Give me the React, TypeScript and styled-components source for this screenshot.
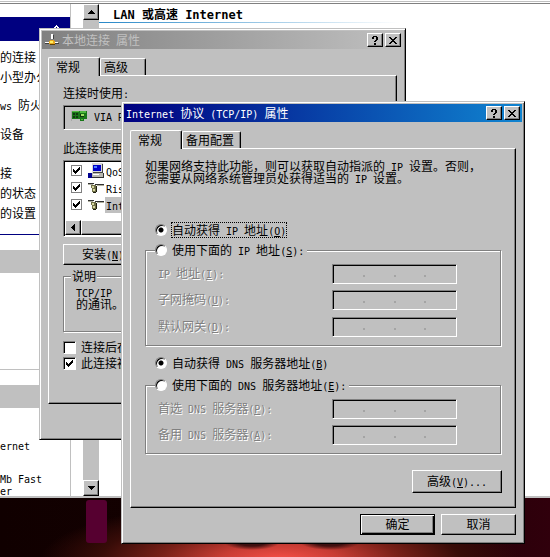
import React from "react";
import styled, { createGlobalStyle, css } from "styled-components";

const face = "#c0c0c0";
const shade = "#808080";

const GlobalStyle = createGlobalStyle`
  * { box-sizing: border-box; }
  body {
    margin: 0;
    font: 12px/12px "Noto Sans CJK SC", "Liberation Sans", sans-serif;
    color: #000;
    white-space: nowrap;
    overflow: hidden;
  }
  button, input { font: inherit; color: inherit; margin: 0; border-radius: 0; }
`;

/* ---------- text ---------- */

const Latin = styled.span`
  font-family: "DejaVu Sans Mono", "Liberation Mono", monospace;
  font-size: 10px;
  line-height: 0;
  white-space: pre;
`;

/** Half-width runs get the monospace face; "&X" underlines the access key X. */
function Text({ children }: { children: string }) {
  const runs = children.match(/[\x20-\x7e]+|[^\x20-\x7e]+/g) ?? [];
  return (
    <>
      {runs.map((run, i) => {
        if (!/^[\x20-\x7e]/.test(run)) return <React.Fragment key={i}>{run}</React.Fragment>;
        const [before, after] = run.split("&");
        return (
          <Latin key={i}>
            {before}
            {after && <u>{after[0]}</u>}
            {after && after.slice(1)}
          </Latin>
        );
      })}
    </>
  );
}

/* ---------- bevels ---------- */

const raised = css`
  color: #000;
  background: ${face};
  border: 1px solid;
  border-color: #fff #000 #000 #fff;
  box-shadow: inset -1px -1px 0 ${shade};
`;

const sunken = css`
  border: 1px solid;
  border-color: ${shade} #fff #fff ${shade};
  box-shadow: inset 1px 1px 0 #000;
`;

const Button = styled.button<{ $w?: number; $tall?: boolean; $primary?: boolean }>`
  ${raised}
  height: ${(p) => (p.$tall ? 23 : 21)}px;
  width: ${(p) => p.$w ?? 75}px;
  padding: 0 0 2px;
  ${(p) =>
    p.$primary &&
    css`
      border-color: #000;
      box-shadow: inset 1px 1px 0 #fff, inset -1px -1px 0 #000, inset -2px -2px 0 ${shade};
    `}
`;

/* ---------- desktop and the window in the back ---------- */

const Desktop = styled.div`
  position: relative;
  display: flex;
  flex-direction: column;
  height: 100vh;
  overflow: hidden;
`;

const Wallpaper = styled.div`
  height: 59px;
  padding: 2px 86px;
  background:
    radial-gradient(ellipse 28px 8px at 252px 44px, #401010 50%, transparent),
    radial-gradient(ellipse 30px 8px at 330px 44px, #401010 50%, transparent),
    radial-gradient(ellipse 240px 60px at 280px 62px, #f85048, #c83c34 25%, #782018 50%, #380c08 75%, transparent),
    linear-gradient(90deg, #100000, #180202 60%, #30000c);
`;

const Pillar = styled.div`
  width: 21px;
  height: 43px;
  border-radius: 3px;
  background: #560030;
`;

const Explorer = styled.main`
  flex: 1;
  min-height: 0;
  display: flex;
  background: #fff;
  border-bottom: 2px solid ${face};
  box-shadow: inset 0 1px 0 #fff, inset 0 2px 0 ${face}, inset 0 3px 0 #fff, inset 0 4px 0 ${shade};
  padding-top: 4px;
`;

const Sidebar = styled.nav`
  width: 71px;
  overflow: hidden;
  padding-top: 13px;
  border-right: 1px solid ${face};
`;

const SidebarGap = styled.div`
  width: 12px;
`;

const SidebarHead = styled.div<{ $active?: boolean }>`
  display: flex;
  justify-content: flex-end;
  align-items: center;
  height: ${(p) => (p.$active ? 24 : 23)}px;
  margin-right: -1px;
  padding: 0 11px;
  background: ${(p) => (p.$active ? "#000080" : face)};
`;

const TaskList = styled.div`
  display: flex;
  flex-direction: column;
  height: 194px;
  padding-top: 10px;
  border-bottom: 1px solid #000080;
`;

const TaskLink = styled.a<{ $space?: number }>`
  color: #000;
  text-decoration: none;
  height: 12px;
  margin-bottom: ${(p) => p.$space ?? 8}px;
`;

const Blank = styled.div<{ $h: number; $line?: boolean }>`
  height: ${(p) => p.$h}px;
  border-bottom: ${(p) => (p.$line ? `1px solid ${face}` : "0")};
`;

const Details = styled.div`
  padding-top: 31px;
`;

const DetailLine = styled.p<{ $space?: number }>`
  margin: 0 0 ${(p) => p.$space ?? 0}px;
`;

const ScrollTrack = styled.div`
  display: flex;
  flex-direction: column;
  justify-content: space-between;
  width: 16px;
  background: ${face};
`;

const ScrollButton = styled.button<{ $h?: number }>`
  ${raised}
  display: grid;
  place-items: center;
  width: 16px;
  height: ${(p) => p.$h ?? 16}px;
  padding: 0;
`;

const ExplorerBody = styled.section`
  flex: 1;
`;

const SectionTitle = styled.h2`
  margin: 0;
  padding: 4px 14px 2px;
  font-size: 12px;
  line-height: 12px;
  font-weight: 700;
  ${Latin} {
    font-size: 12px;
  }
`;

const TitleRule = styled.div`
  height: 1px;
  max-width: 300px;
  background: linear-gradient(90deg, #2888c8, #fff);
`;

/* ---------- dialogs ---------- */

const Dialog = styled.section<{ $x: number; $y: number; $w: number }>`
  position: absolute;
  left: ${(p) => p.$x}px;
  top: ${(p) => p.$y}px;
  width: ${(p) => p.$w}px;
  padding: 2px;
  background: ${face};
  border: 1px solid;
  border-color: ${face} #000 #000 ${face};
  box-shadow: inset 1px 1px 0 #fff, inset -1px -1px 0 ${shade};
`;

const TitleBar = styled.header<{ $active?: boolean }>`
  display: flex;
  align-items: center;
  height: 18px;
  padding: 0 2px;
  color: ${(p) => (p.$active ? "#fff" : face)};
  background: ${(p) =>
    p.$active
      ? "linear-gradient(90deg, #000080, #1084d0)"
      : "linear-gradient(90deg, #808080, #c0c0c0)"};
`;

const TitleIcon = styled.span`
  display: flex;
  width: 18px;
`;

const Title = styled.h1`
  flex: 1;
  margin: 0;
  font-size: 12px;
  line-height: 14px;
  font-weight: 400;
`;

const CaptionButton = styled.button`
  ${raised}
  display: grid;
  place-items: center;
  width: 16px;
  height: 14px;
  padding: 0;
  margin-left: 2px;
`;

const Tabs = styled.div`
  display: flex;
  align-items: flex-end;
  height: 26px;
  margin: 0 6px;
`;

const Tab = styled.button<{ $selected?: boolean; $w: number }>`
  width: ${(p) => p.$w}px;
  height: ${(p) => (p.$selected ? 19 : 17)}px;
  margin-bottom: ${(p) => (p.$selected ? -1 : 0)}px;
  padding: 0 0 1px ${(p) => (p.$selected ? 7 : 3)}px;
  text-align: left;
  z-index: ${(p) => (p.$selected ? 1 : 0)};
  background: ${face};
  border: 1px solid;
  border-color: #fff #000 transparent #fff;
  border-bottom: 0;
  border-radius: 2px 2px 0 0;
  box-shadow: inset -1px 0 0 ${shade};
`;

const Page = styled.div<{ $bottom: number }>`
  display: flex;
  flex-direction: column;
  margin: 0 6px;
  padding: 11px 13px ${(p) => p.$bottom}px 14px;
  ${raised}
`;

const Intro = styled.p`
  margin: 0 0 38px;
`;

const Group = styled.fieldset<{ $space: number; $before?: number }>`
  min-width: 0;
  margin: ${(p) => p.$before ?? 0}px 1px ${(p) => p.$space}px 0;
  padding: 6px 43px 8px 12px;
  border: 1px solid ${shade};
  box-shadow: 1px 1px 0 #fff, inset 1px 1px 0 #fff;
`;

const Legend = styled.legend<{ $text?: boolean }>`
  margin-left: ${(p) => (p.$text ? -5 : -3)}px;
  padding: 0 ${(p) => (p.$text ? 1 : 2)}px 0 ${(p) => (p.$text ? 1 : 0)}px;
  background: ${face};
`;

const Choice = styled.label<{ $inset?: boolean }>`
  display: flex;
  align-items: center;
  gap: 4px;
  height: 16px;
  margin-left: ${(p) => (p.$inset ? 10 : 0)}px;
`;

const ChoiceText = styled.span<{ $focused?: boolean }>`
  line-height: 14px;
  border: 1px dotted ${(p) => (p.$focused ? "#000" : "transparent")};
`;

const Radio = styled.input.attrs({ type: "radio" })`
  appearance: none;
  width: 12px;
  height: 12px;
  border: 1px solid;
  border-color: ${shade} #fff #fff ${shade};
  border-radius: 50%;
  background: #fff;
  box-shadow: inset 1px 1px 0 #000;
  &:checked {
    background: radial-gradient(circle at center, #000 2px, #fff 3px);
  }
`;

const IpRow = styled.div<{ $space: number }>`
  display: flex;
  justify-content: space-between;
  align-items: center;
  height: 20px;
  margin-bottom: ${(p) => p.$space}px;
`;

const IpLabel = styled.label`
  padding-bottom: 2px;
  color: ${shade};
  text-shadow: 1px 1px 0 #fff;
`;

const IpBox = styled.div`
  ${sunken}
  display: flex;
  align-items: center;
  width: 125px;
  height: 20px;
  padding: 1px;
`;

const Octet = styled.input`
  flex: 1;
  min-width: 0;
  height: 14px;
  padding: 0;
  border: 0;
  background: transparent;
  text-align: center;
`;

const Dot = styled.span`
  width: 2px;
  height: 2px;
  margin-top: 4px;
  background: #a4a4a4;
`;

const Actions = styled.div<{ $footer?: boolean }>`
  display: flex;
  justify-content: flex-end;
  gap: 6px;
  padding: ${(p) => (p.$footer ? "6px 6px" : "0")};
`;

/* ---------- connection dialog parts ---------- */

const FieldLabel = styled.p`
  margin: 0 0 6px;
`;

const Adapter = styled.div`
  ${sunken}
  display: flex;
  align-items: center;
  gap: 7px;
  height: 25px;
  margin-bottom: 12px;
  padding: 0 7px 4px;
`;

const ComponentList = styled.div`
  ${sunken}
  height: 77px;
  margin-bottom: 7px;
  padding: 1px;
  background: #fff;
`;

const ComponentRow = styled.label`
  display: flex;
  align-items: center;
  height: 17px;
  padding-left: 6px;
`;

const Check = styled.input.attrs({ type: "checkbox" })<{ $flat?: boolean }>`
  appearance: none;
  ${sunken}
  width: ${(p) => (p.$flat ? 11 : 13)}px;
  height: ${(p) => (p.$flat ? 11 : 13)}px;
  background: #fff;
  ${(p) =>
    p.$flat &&
    css`
      border-color: ${shade};
      box-shadow: none;
    `}
`;

const CheckCell = styled.span`
  display: grid;
  > * { grid-area: 1 / 1; place-self: center; }
  > svg { pointer-events: none; }
  > input:not(:checked) + svg { visibility: hidden; }
`;

const RowIcon = styled.span`
  display: flex;
  width: 17px;
  margin: 0 0 0 6px;
`;

const RowName = styled.span<{ $selected?: boolean }>`
  padding: 2px 1px;
  background: ${(p) => (p.$selected ? face : "transparent")};
`;

const HScroll = styled.div`
  display: flex;
  height: 15px;
  margin-top: 7px;
  background: ${face};
`;

const Thumb = styled.div`
  ${raised}
  flex: 1;
`;

const Note = styled.p`
  height: 37px;
  margin: -2px 0 0;
`;

const CheckRow = styled.label`
  display: flex;
  align-items: center;
  gap: 5px;
  height: 16px;
`;

const ConnectionFooter = styled.div`
  height: 33px;
`;

/* ---------- icons ---------- */

const Pixels = ({ w, h, d, color = "currentColor" }: { w: number; h: number; d: string; color?: string }) => (
  <svg width={w} height={h} viewBox={`0 0 ${w} ${h}`} shapeRendering="crispEdges" aria-hidden="true">
    <path d={d} fill={color} />
  </svg>
);

const Arrow = ({ dir }: { dir: "up" | "down" | "left" }) =>
  dir === "left" ? (
    <Pixels w={4} h={7} d="M3 0h1v7h-1zM2 1h1v5h-1zM1 2h1v3h-1zM0 3h1v1h-1z" />
  ) : dir === "up" ? (
    <Pixels w={7} h={4} d="M3 0h1v1h-1zM2 1h3v1h-3zM1 2h5v1h-5zM0 3h7v1h-7z" />
  ) : (
    <Pixels w={7} h={4} d="M0 0h7v1h-7zM1 1h5v1h-5zM2 2h3v1h-3zM3 3h1v1h-1z" />
  );

const HelpIcon = () => (
  <Pixels w={6} h={9} d="M1 0h4v1h-4zM0 1h2v2h-2zM4 1h2v3h-2zM3 4h2v1h-2zM2 5h2v1h-2zM2 7h2v2h-2z" />
);

const CloseIcon = () => (
  <Pixels
    w={8}
    h={7}
    d="M0 0h2v1h-2zM6 0h2v1h-2zM1 1h2v1h-2zM5 1h2v1h-2zM2 2h4v1h-4zM3 3h2v1h-2zM2 4h4v1h-4zM1 5h2v1h-2zM5 5h2v1h-2zM0 6h2v1h-2zM6 6h2v1h-2z"
  />
);

const Tick = () => (
  <Pixels w={7} h={7} d="M0 2h1v3h-1zM1 3h1v3h-1zM2 4h1v3h-1zM3 3h1v3h-1zM4 2h1v3h-1zM5 1h1v3h-1zM6 0h1v3h-1z" />
);

const Chevron = () => (
  <Pixels w={7} h={8} color="#fff" d="M3 0h1v1h-1zM2 1h3v1h-3zM1 2h2v1h-2zM4 2h2v1h-2zM0 3h2v1h-2zM5 3h2v1h-2zM3 4h1v1h-1zM2 5h3v1h-3zM1 6h2v1h-2zM4 6h2v1h-2zM0 7h2v1h-2zM5 7h2v1h-2z" />
);

const PlugIcon = () => (
  <svg width="16" height="12" viewBox="0 0 16 12" shapeRendering="crispEdges" aria-hidden="true">
    <path d="M7 0h2v5h-2z" fill="#fff" />
    <path d="M9 1h1v4h-1z" fill="#404040" />
    <path d="M1 8h13v1h-13z" fill="#fff" />
    <path d="M1 9h14v1h-14z" fill="#404040" />
    <path d="M6 6h4v1h1v3h-6v-3h1z" fill="#e8a820" />
    <path d="M6 7h3v2h-3z" fill="#fff060" />
    <path d="M6 10h5v1h-5z" fill="#604000" />
  </svg>
);

const CardIcon = () => (
  <svg width="16" height="12" viewBox="0 0 16 12" shapeRendering="crispEdges" aria-hidden="true">
    <path d="M1 1h15v8h-3v2h-4v-2h-8z" fill="#187818" />
    <path d="M1 1h7v1h-7zM9 1h6v2h-6zM10 9h2v1h-2z" fill="#50b840" />
    <path d="M2 3h2v2h-2zM5 3h2v2h-2zM2 6h2v2h-2zM5 6h2v2h-2zM9 4h4v3h-4z" fill="#103810" />
    <path d="M10 4h3v2h-3z" fill="#a0e060" />
    <path d="M0 1h1v10h-1z" fill="#a8a8a8" />
  </svg>
);

const ComputerIcon = () => (
  <svg width="16" height="16" viewBox="0 0 16 16" shapeRendering="crispEdges" aria-hidden="true">
    <path d="M4 0h10l1 1v9h-11z" fill="#d8d8d8" />
    <path d="M14 1h1v9h-10v-1h9z" fill="#404040" />
    <path d="M5 2h8v6h-8z" fill="#0000c8" />
    <path d="M6 3h3v2h-3z" fill="#5080ff" />
    <path d="M3 10h12v4h-12z" fill="#b8b8b0" />
    <path d="M15 10h1v5h-12v-1h11z" fill="#303030" />
    <path d="M0 10h4v5h-4z" fill="#000090" />
    <path d="M5 11h6v1h-6z" fill="#fff" />
  </svg>
);

const ProtocolIcon = () => (
  <svg width="16" height="12" viewBox="0 0 16 12" shapeRendering="crispEdges" aria-hidden="true">
    <path d="M0 1h6v1h-6zM7 2h9v1h-9z" fill="#303030" />
    <path d="M0 2h5v1h-5zM9 3h7v1h-7z" fill="#b0b0a0" />
    <path d="M3 3h5v3h-5zM4 6h4v4h-4z" fill="#707048" />
    <path d="M4 4h2v2h-2zM5 7h2v2h-2z" fill="#d8d8a0" />
    <path d="M8 4h1v6h-1zM5 10h3v1h-3z" fill="#202010" />
  </svg>
);

/* ---------- composition ---------- */

const Caption = ({ title, active, icon }: { title: string; active?: boolean; icon?: React.ReactNode }) => (
  <TitleBar $active={active}>
    {icon && <TitleIcon>{icon}</TitleIcon>}
    <Title>
      <Text>{title}</Text>
    </Title>
    <CaptionButton aria-label="帮助"><HelpIcon /></CaptionButton>
    <CaptionButton aria-label="关闭"><CloseIcon /></CaptionButton>
  </TitleBar>
);

function IpField({ id, label, space = 6 }: { id: string; label: string; space?: number }) {
  return (
    <IpRow $space={space}>
      <IpLabel htmlFor={`${id}-0`}>
        <Text>{label}</Text>
      </IpLabel>
      <IpBox>
        {[0, 1, 2, 3].map((n) => (
          <React.Fragment key={n}>
            {n > 0 && <Dot />}
            <Octet id={`${id}-${n}`} disabled maxLength={3} />
          </React.Fragment>
        ))}
      </IpBox>
    </IpRow>
  );
}

function RadioChoice(p: { name: string; label: string; checked?: boolean; focused?: boolean; inset?: boolean }) {
  return (
    <Choice $inset={p.inset}>
      <Radio name={p.name} defaultChecked={p.checked} />
      <ChoiceText $focused={p.focused}>
        <Text>{p.label}</Text>
      </ChoiceText>
    </Choice>
  );
}

const CheckBox = ({ flat, checked }: { flat?: boolean; checked?: boolean }) => (
  <CheckCell>
    <Check $flat={flat} defaultChecked={checked} />
    <Tick />
  </CheckCell>
);

const tasks: [string, number][] = [
  ["的连接", 8],
  ["小型办公", 16],
  ["ws 防火", 17],
  ["设备", 27],
  ["接", 8],
  ["的状态", 8],
  ["的设置", 0],
];

const components = [
  { name: "QoS", icon: <ComputerIcon /> },
  { name: "Ris", icon: <ProtocolIcon /> },
  { name: "Int", icon: <ProtocolIcon />, selected: true },
];

const ConnectionDialog = () => (
  <Dialog $x={39} $y={28} $w={367}>
    <Caption title="本地连接 属性" icon={<PlugIcon />} />
    <Tabs>
      <Tab $selected $w={52}>常规</Tab>
      <Tab $w={46}>高级</Tab>
    </Tabs>
    <Page $bottom={32}>
      <FieldLabel><Text>连接时使用:</Text></FieldLabel>
      <Adapter>
        <CardIcon />
        <span><Text>VIA R</Text></span>
      </Adapter>
      <FieldLabel>此连接使用</FieldLabel>
      <ComponentList>
        {components.map((c) => (
          <ComponentRow key={c.name}>
            <CheckBox flat checked />
            <RowIcon>{c.icon}</RowIcon>
            <RowName $selected={c.selected}><Text>{c.name}</Text></RowName>
          </ComponentRow>
        ))}
        <HScroll>
          <ScrollButton $h={15} aria-label="向左滚动"><Arrow dir="left" /></ScrollButton>
          <Thumb />
        </HScroll>
      </ComponentList>
      <Button $w={80}><Text>安装(&N)</Text></Button>
      <Group $before={5} $space={7}>
        <Legend $text>说明</Legend>
        <Note>
          <Text>TCP/IP</Text>
          <br />
          的通讯。
        </Note>
      </Group>
      <CheckRow><CheckBox />连接后在</CheckRow>
      <CheckRow><CheckBox checked />此连接被</CheckRow>
    </Page>
    <ConnectionFooter />
  </Dialog>
);

const TcpIpDialog = () => (
  <Dialog $x={121} $y={101} $w={404}>
    <Caption title="Internet 协议 (TCP/IP) 属性" active />
    <Tabs>
      <Tab $selected $w={52}>常规</Tab>
      <Tab $w={59}>备用配置</Tab>
    </Tabs>
    <Page $bottom={14}>
      <Intro>
        <Text>如果网络支持此功能，则可以获取自动指派的 IP 设置。否则，</Text>
        <br />
        <Text>您需要从网络系统管理员处获得适当的 IP 设置。</Text>
      </Intro>
      <RadioChoice name="ip" label="自动获得 IP 地址(&O)" checked focused inset />
      <Group $before={4} $space={9}>
        <Legend><RadioChoice name="ip" label="使用下面的 IP 地址(&S):" /></Legend>
        <IpField id="address" label="IP 地址(&I):" />
        <IpField id="mask" label="子网掩码(&U):" space={7} />
        <IpField id="gateway" label="默认网关(&D):" space={0} />
      </Group>
      <RadioChoice name="dns" label="自动获得 DNS 服务器地址(&B)" checked inset />
      <Group $before={6} $space={16}>
        <Legend><RadioChoice name="dns" label="使用下面的 DNS 服务器地址(&E):" /></Legend>
        <IpField id="dns1" label="首选 DNS 服务器(&P):" />
        <IpField id="dns2" label="备用 DNS 服务器(&A):" space={0} />
      </Group>
      <Actions>
        <Button $w={90} $tall><Text>高级(&V)...</Text></Button>
      </Actions>
    </Page>
    <Actions $footer>
      <Button $primary>确定</Button>
      <Button>取消</Button>
    </Actions>
  </Dialog>
);

export default function App() {
  return (
    <Desktop lang="zh-CN">
      <GlobalStyle />
      <Explorer>
        <Sidebar>
          <SidebarHead $active><Chevron /></SidebarHead>
          <TaskList>
            {tasks.map(([name, space]) => (
              <TaskLink key={name} href="#" $space={space}><Text>{name}</Text></TaskLink>
            ))}
          </TaskList>
          <Blank $h={15} />
          <SidebarHead />
          <Blank $h={97} $line />
          <Blank $h={15} />
          <SidebarHead />
          <Details>
            <DetailLine $space={21}><Text>ernet</Text></DetailLine>
            <DetailLine><Text>Mb Fast</Text></DetailLine>
            <DetailLine><Text>er</Text></DetailLine>
          </Details>
        </Sidebar>
        <SidebarGap />
        <ScrollTrack>
          <ScrollButton aria-label="向上滚动"><Arrow dir="up" /></ScrollButton>
          <ScrollButton aria-label="向下滚动"><Arrow dir="down" /></ScrollButton>
        </ScrollTrack>
        <ExplorerBody>
          <SectionTitle><Text>LAN 或高速 Internet</Text></SectionTitle>
          <TitleRule />
        </ExplorerBody>
      </Explorer>
      <Wallpaper><Pillar /></Wallpaper>
      <ConnectionDialog />
      <TcpIpDialog />
    </Desktop>
  );
}
